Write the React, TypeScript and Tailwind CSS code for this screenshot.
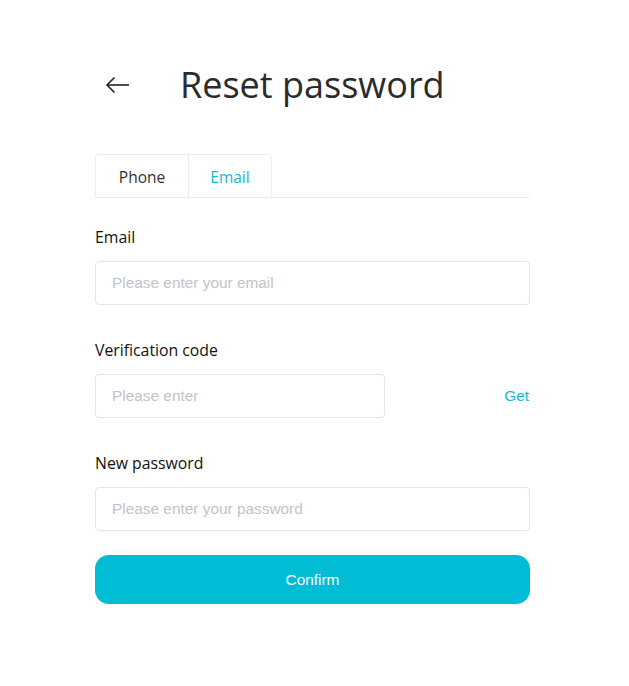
import React, { useState } from 'react'

const labelCls = 'h-[22px] leading-[22px] text-[15.8px] text-[#111] font-["Open_Sans",sans-serif]'
const inputCls =
  'h-[44px] w-full rounded-[4px] border border-[#e4e6eb] bg-white px-4 text-[15.4px] text-[#333] outline-none placeholder:text-[#c0c4cc] font-["Liberation_Sans",Arial,sans-serif]'

export default function App() {
  const [tab, setTab] = useState<'phone' | 'email'>('email')

  return (
    <div className="min-h-screen w-full bg-white">
      <div className="ml-[95px] w-[435px] pt-[60px]">
        <div className="flex h-[50px] items-center">
          <button className="ml-[9px] flex h-[24px] w-[26px] items-center justify-center text-[#222]">
            <svg width="25" height="18" viewBox="0 0 25 18" fill="none" stroke="currentColor" strokeWidth="1.6">
              <path d="M24 9H2" />
              <path d="M9.5 1.5L2 9l7.5 7.5" />
            </svg>
          </button>
          <h1 className='ml-[50px] text-[36px] leading-[50px] text-[#2b2b2b] font-["Open_Sans",sans-serif]'>
            Reset password
          </h1>
        </div>

        <div className="mt-[44px] flex border-b border-[#ebedf0]">
          <button
            onClick={() => setTab('phone')}
            className={`h-[43px] w-[93px] rounded-tl-[4px] border-l border-t border-[#ebedf0] pt-[3px] text-[15.5px] font-["Open_Sans",sans-serif] ${tab === 'phone' ? 'text-[#18b6d0]' : 'text-[#333]'}`}
          >
            Phone
          </button>
          <button
            onClick={() => setTab('email')}
            className={`h-[43px] w-[84px] rounded-tr-[4px] border-x border-t border-[#ebedf0] pt-[3px] text-[15.5px] font-["Open_Sans",sans-serif] ${tab === 'email' ? 'text-[#18b6d0]' : 'text-[#333]'}`}
          >
            Email
          </button>
        </div>

        <div className={`mt-[28px] ${labelCls}`}>Email</div>
        <input className={`mt-[13px] ${inputCls}`} placeholder="Please enter your email" />

        <div className={`mt-[34px] ${labelCls}`}>Verification code</div>
        <div className="mt-[13px] flex items-center justify-between">
          <input className={`${inputCls} !w-[290px]`} placeholder="Please enter" />
          <button className='mr-[1px] text-[15.4px] text-[#18b6d0] font-["Liberation_Sans",Arial,sans-serif]'>Get</button>
        </div>

        <div className={`mt-[34px] ${labelCls}`}>New password</div>
        <input type="password" className={`mt-[13px] ${inputCls}`} placeholder="Please enter your password" />

        <button className='mt-[24px] h-[49px] w-full rounded-[14px] bg-[#00bcd4] text-[15.4px] text-white font-["Liberation_Sans",Arial,sans-serif]'>
          Confirm
        </button>
      </div>
    </div>
  )
}
